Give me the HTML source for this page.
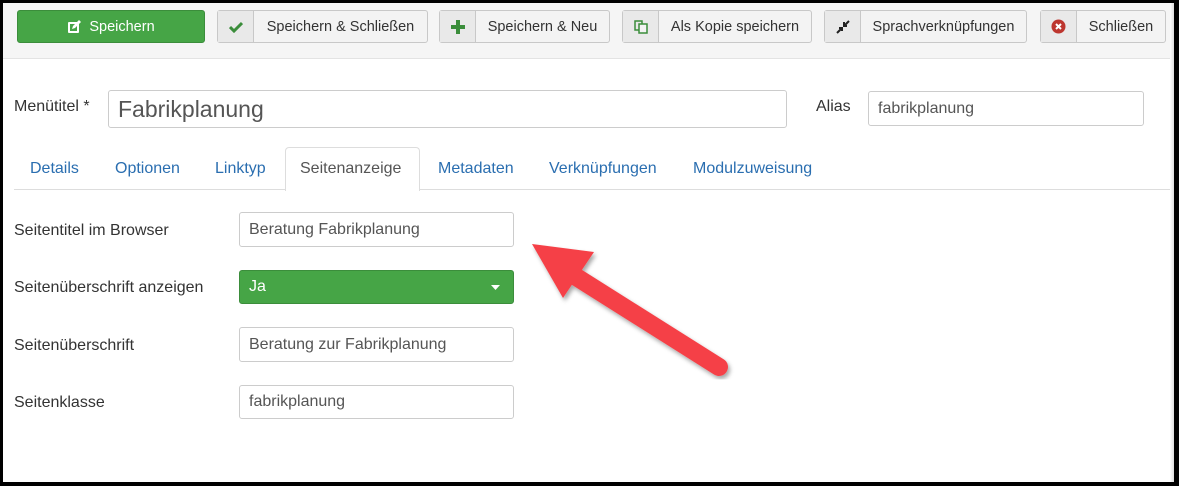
<!DOCTYPE html>
<html><head><meta charset="utf-8"><style>
*{box-sizing:border-box;margin:0;padding:0}
body{width:1179px;height:486px;background:#000;font-family:"Liberation Sans",sans-serif;font-size:16px;color:#333;position:relative;overflow:hidden}
#pg{position:absolute;left:3px;top:3px;width:1171px;height:479px;background:#fff;overflow:hidden}
#tb{position:absolute;left:0;top:0;width:100%;height:56px;background:#f5f5f5;border-bottom:1px solid #e3e3e3}
.a{position:absolute}
.btn{position:absolute;top:7px;height:33px;border:1px solid #c8c8c8;border-radius:3px;background:#f3f3f3;display:flex;align-items:center;font-size:14.5px;color:#333}
.btn .ic{width:36px;height:100%;border-right:1px solid #c8c8c8;background:#e9e9e9;display:flex;align-items:center;justify-content:center}
.btn .t{flex:1;text-align:center}
.in{position:absolute;border:1px solid #ccc;border-radius:3px;background:#fff;padding-left:9px;display:flex;align-items:center;color:#555;font-size:16px}
.lbl{position:absolute;font-size:16px;color:#333}
.tab{position:absolute;top:157px;color:#2a6eb0;font-size:16px}
</style></head><body>
<div id="pg">
<div id="tb">
 <div class="btn" style="left:14px;width:188px;background:#46a546;border-color:#3b8d3b;color:#fff;justify-content:center">
  <svg width="15" height="14" viewBox="0 0 15 14" style="margin-right:7px"><rect x="1" y="2" width="11" height="11" fill="#fff" rx="1"/><rect x="3" y="4" width="7" height="7" fill="#46a546"/><path d="M5 9 L6 6 L12 0 L14 2 L8 8 Z" fill="#fff"/></svg>Speichern</div>
 <div class="btn" style="left:214px;width:211px"><div class="ic"><svg width="14" height="12"><path d="M1 6 L5 10 L13 2" stroke="#3b8d3b" stroke-width="3" fill="none"/></svg></div><div class="t">Speichern &amp; Schließen</div></div>
 <div class="btn" style="left:436px;width:171px"><div class="ic"><svg width="14" height="14"><path d="M7 0V14M0 7H14" stroke="#3b8d3b" stroke-width="4"/></svg></div><div class="t">Speichern &amp; Neu</div></div>
 <div class="btn" style="left:619px;width:190px"><div class="ic"><svg width="14" height="14"><rect x="1" y="1" width="7" height="9" fill="none" stroke="#3b8d3b" stroke-width="1.5"/><rect x="5" y="4" width="8" height="9" fill="#f3f3f3" stroke="#3b8d3b" stroke-width="1.5"/></svg></div><div class="t">Als Kopie speichern</div></div>
 <div class="btn" style="left:821px;width:203px"><div class="ic"><svg width="14" height="14"><path d="M1 13L5 9M3 8H6V11M13 1L9 5M8 2V6H11" stroke="#222" stroke-width="2" fill="none"/></svg></div><div class="t">Sprachverknüpfungen</div></div>
 <div class="btn" style="left:1037px;width:126px"><div class="ic"><svg width="15" height="15"><circle cx="7.5" cy="7.5" r="7" fill="#bd362f"/><path d="M5 5L10 10M10 5L5 10" stroke="#fff" stroke-width="2"/></svg></div><div class="t">Schließen</div></div>
</div>
<div class="lbl" style="left:11px;top:95px">Menütitel *</div>
<div class="in" style="left:105px;top:87px;width:679px;height:38px;font-size:23px;color:#555">Fabrikplanung</div>
<div class="lbl" style="left:813px;top:95px">Alias</div>
<div class="in" style="left:865px;top:88px;width:276px;height:35px">fabrikplanung</div>
<div class="a" style="left:11px;top:186px;width:1160px;border-top:1px solid #ddd"></div>
<div class="a" style="left:282px;top:144px;width:135px;border:1px solid #ddd;border-bottom:none;border-radius:4px 4px 0 0;background:#fff;height:44px"></div>
<div class="tab" style="left:27px">Details</div>
<div class="tab" style="left:112px">Optionen</div>
<div class="tab" style="left:212px">Linktyp</div>
<div class="tab" style="left:297px;color:#555">Seitenanzeige</div>
<div class="tab" style="left:435px">Metadaten</div>
<div class="tab" style="left:546px">Verknüpfungen</div>
<div class="tab" style="left:690px">Modulzuweisung</div>
<div class="lbl" style="left:11px;top:219px">Seitentitel im Browser</div>
<div class="in" style="left:236px;top:209px;width:275px;height:35px">Beratung Fabrikplanung</div>
<div class="lbl" style="left:11px;top:276px">Seitenüberschrift anzeigen</div>
<div class="in" style="left:236px;top:267px;width:275px;height:34px;background:#46a546;border-color:#3b8d3b;color:#fff">Ja<svg class="a" style="right:13px;top:14px" width="9" height="5"><path d="M0 0H9L4.5 5Z" fill="#fff"/></svg></div>
<div class="lbl" style="left:11px;top:334px">Seitenüberschrift</div>
<div class="in" style="left:236px;top:324px;width:275px;height:35px">Beratung zur Fabrikplanung</div>
<div class="lbl" style="left:11px;top:391px">Seitenklasse</div>
<div class="in" style="left:236px;top:382px;width:275px;height:34px">fabrikplanung</div>
<svg class="a" style="left:0;top:0" width="1171" height="479">
 <defs><filter id="s"><feDropShadow dx="2" dy="3" stdDeviation="2" flood-opacity="0.35"/></filter></defs>
 <g filter="url(#s)" fill="#f54147">
  <path d="M529 241 L591 249 L560 295 Z"/>
  <line x1="567" y1="270" x2="716" y2="364" stroke="#f54147" stroke-width="18" stroke-linecap="round"/>
 </g>
</svg>
<div class="a" style="right:0;top:0;width:4px;height:100%;background:linear-gradient(90deg,#fff,#ddd)"></div>
</div>
</body></html>
